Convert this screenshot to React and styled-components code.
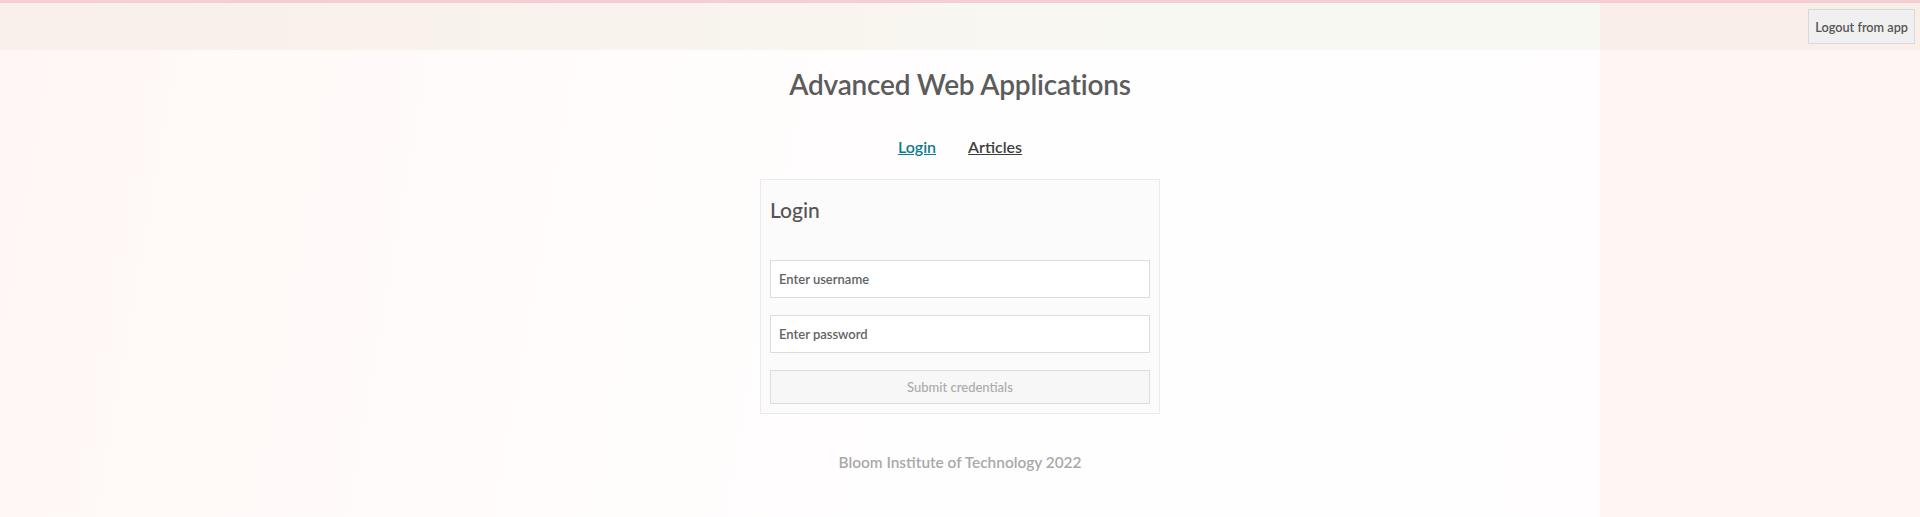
import React, { useState } from 'react';
import styled, { createGlobalStyle } from 'styled-components';

const GlobalStyle = createGlobalStyle`
  html, body {
    margin: 0;
    padding: 0;
  }

  body {
    min-height: 517px;
    font-family: Lato, 'Open Sans', sans-serif;
    background:
      linear-gradient(to right, transparent 1600px, #fdf6f3 1600px),
      linear-gradient(100deg, #fff7f5 0%, #fffbfa 25%, #fffefe 50%, #fffdfd 100%);
  }
`;

const Page = styled.div`
  display: flex;
  flex-direction: column;
  align-items: center;
  min-height: 517px;
  border-top: 3px solid #f7cdd5;
  box-sizing: border-box;
`;

const TopBar = styled.header`
  align-self: stretch;
  display: flex;
  justify-content: flex-end;
  align-items: center;
  height: 47px;
  padding: 0 5px;
  background:
    linear-gradient(to right, transparent 1600px, #f9efe8 1600px),
    linear-gradient(to right, #f8f0e9 0%, #f8f3ec 30%, #f8f8f2 60%, #f8f8f2 100%);
`;

const LogoutButton = styled.button`
  height: 35px;
  padding: 0 6px;
  font-family: inherit;
  font-size: 12.7px;
  font-weight: 600;
  color: #555;
  background-color: #f0f0f0;
  border: 1px solid #d9d9d9;
  cursor: pointer;
`;

const Title = styled.h1`
  margin: 16px 0 0;
  font-size: 28px;
  line-height: 36px;
  font-weight: 600;
  letter-spacing: -0.2px;
  color: #5c5c5c;
`;

const Nav = styled.nav`
  display: flex;
  gap: 32px;
  margin-top: 35px;
`;

const NavLink = styled.a`
  font-size: 16px;
  line-height: 20px;
  font-weight: 600;
  color: ${({ active }) => (active ? '#0e7c8a' : '#3e3e3e')};
  text-decoration: underline;
  cursor: pointer;
`;

const Card = styled.form`
  display: flex;
  flex-direction: column;
  width: 400px;
  margin-top: 22px;
  padding: 9px;
  box-sizing: border-box;
  background-color: #fbfbfb;
  border: 1px solid #ebebeb;
`;

const CardTitle = styled.h2`
  margin: 8px 0 37px;
  font-size: 21px;
  line-height: 26px;
  font-weight: 500;
  color: #555;
`;

const Input = styled.input`
  height: 38px;
  margin-bottom: 17px;
  padding: 0 8px;
  box-sizing: border-box;
  font-family: inherit;
  font-size: 13px;
  font-weight: 600;
  color: #444;
  background-color: #fff;
  border: 1px solid #dcdcdc;
  outline: none;

  &::placeholder {
    color: #636363;
  }
`;

const SubmitButton = styled.button`
  height: 34px;
  font-family: inherit;
  font-size: 13px;
  font-weight: 500;
  color: #ababab;
  background-color: #f7f7f7;
  border: 1px solid #dcdcdc;
`;

const Footer = styled.footer`
  margin-top: 38px;
  font-size: 15.4px;
  line-height: 20px;
  font-weight: 600;
  color: #a9a9a9;
`;

const App = () => {
  const [username, setUsername] = useState('');
  const [password, setPassword] = useState('');

  return (
    <>
      <GlobalStyle />
      <Page>
        <TopBar>
          <LogoutButton>Logout from app</LogoutButton>
        </TopBar>
        <Title>Advanced Web Applications</Title>
        <Nav>
          <NavLink active>Login</NavLink>
          <NavLink>Articles</NavLink>
        </Nav>
        <Card onSubmit={(e) => e.preventDefault()}>
          <CardTitle>Login</CardTitle>
          <Input placeholder="Enter username" value={username} onChange={(e) => setUsername(e.target.value)} />
          <Input
            placeholder="Enter password"
            type="password"
            value={password}
            onChange={(e) => setPassword(e.target.value)}
          />
          <SubmitButton disabled>Submit credentials</SubmitButton>
        </Card>
        <Footer>Bloom Institute of Technology 2022</Footer>
      </Page>
    </>
  );
};

export default App;
